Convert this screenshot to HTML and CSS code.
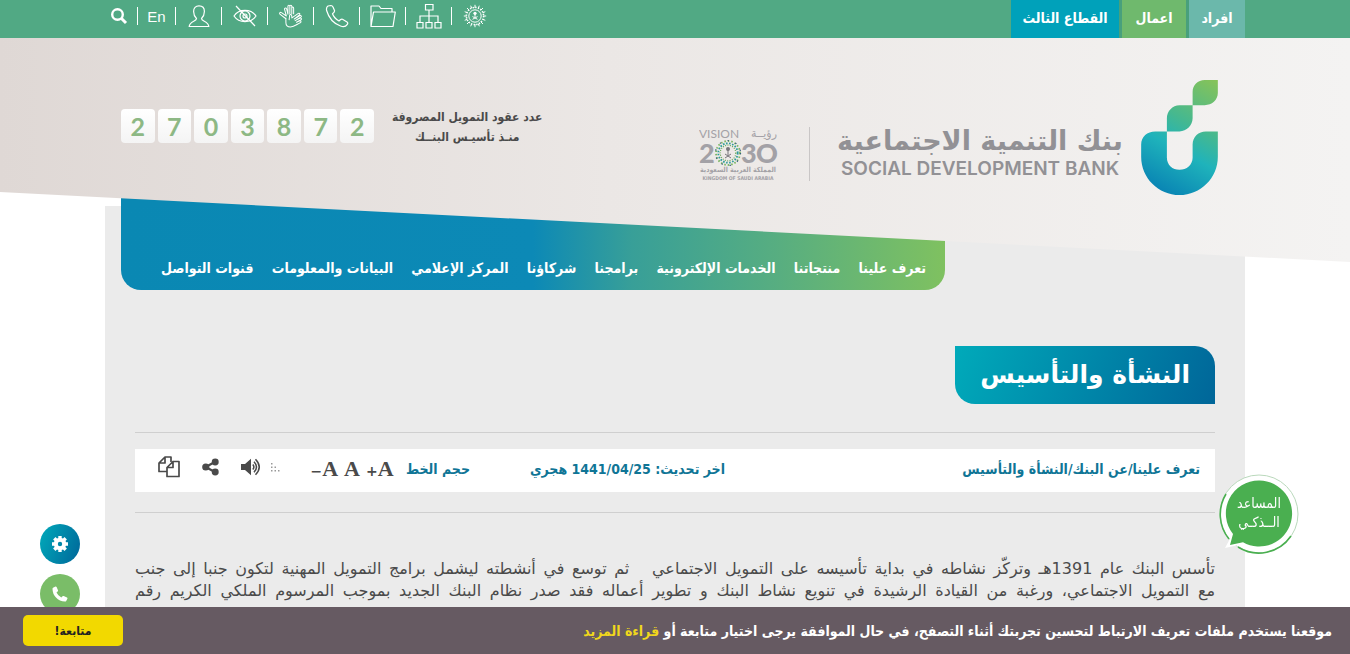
FILE: index.html
```html
<!DOCTYPE html>
<html lang="ar" dir="rtl">
<head>
<meta charset="utf-8">
<title>النشأة والتأسيس</title>
<link rel="stylesheet" href="styles.css">
</head>
<body>
<div class="topbar">
  <div class="container topbar-inner">
    <nav class="sectors" aria-label="القطاعات">
      <a class="sector sector-people" href="#">افراد</a>
      <a class="sector sector-business" href="#">اعمال</a>
      <a class="sector sector-third" href="#">القطاع الثالث</a>
    </nav>
    <div class="quick" dir="ltr">
      <a class="quick-item quick-small" href="#" aria-label="بحث"><svg width="18" height="18" viewBox="0 0 18 18" fill="none" stroke="#fff" stroke-width="2.4"><circle cx="7.5" cy="7.5" r="5.3"/><path d="M11.5 11.5L16 16" stroke-width="3"/></svg></a>
      <a class="quick-item quick-small" href="#">En</a>
      <a class="quick-item" href="#" aria-label="حسابي"><svg width="22" height="24" viewBox="0 0 22 24" fill="none" stroke="#fff" stroke-width="1.2"><path d="M8.500 14.500C6.500 12.500 5.600 10 5.600 7.500C5.600 4 7.600 1.800 11 1.800C14.400 1.800 16.400 4 16.400 7.500C16.400 10 15.500 12.500 13.500 14.500C13.500 17.500 20.500 17 20.800 22.500H1.200C1.500 17 8.500 17.500 8.500 14.500Z"/></svg></a>
      <a class="quick-item" href="#" aria-label="ضعاف البصر"><svg width="24" height="24" viewBox="0 0 24 24" fill="none" stroke="#fff" stroke-width="1.2"><path d="M1 12C6 4.500 18 4.500 23 12C18 19.500 6 19.500 1 12Z"/><circle cx="12" cy="12" r="5"/><circle cx="12" cy="12" r="2"/><path d="M3 2L22 22"/></svg></a>
      <a class="quick-item" href="#" aria-label="لغة الإشارة"><svg width="25" height="24" viewBox="0 0 26 26" fill="none" stroke="#fff" stroke-width="1.100" stroke-linejoin="round"><path d="M8 16L1.500 11C.5 9.700 2 8.500 3.200 9.400L8.500 13L6.500 5.500C6.500 4 8.300 3.800 8.800 5.200L10.200 11V2.500C10.200 1 12.300 1 12.300 2.500V10.500V2.500C12.300 1 14.400 1 14.400 2.500V10.500V4.500C14.400 3 16.400 3 16.400 4.500V11"/><path d="M8 15V20C8 23 10 24.800 13 24.800C17 24.800 19 22.500 24 20C25 19 24 18 23 18.300L19.500 19.800L24.500 17C25.500 16 24.500 15 23.500 15.300L18 18L24.500 14C25.300 13 24.300 12 23.300 12.500L17 16.300L23 11.500C23.500 10.500 22.500 9.500 21.500 10.200L14.500 15L14.300 12.500C13.800 11 12 11.200 12 12.700L11.500 17.500"/></svg></a>
      <a class="quick-item" href="#" aria-label="اتصل بنا"><svg width="24" height="24" viewBox="0 0 24 24" fill="none" stroke="#fff" stroke-width="1.200" stroke-linejoin="round"><path d="M3 2L6 1.500C7 1.500 7.500 2 8 3L9.500 6.500C9.800 7.500 9.300 8.300 7.500 9.700C8.500 12.500 11 15.200 14 17C15.700 15 16.400 14.800 17.500 15.300L22 18C23 18.700 22.900 19.500 22.300 20.300C20.800 22.600 18.500 23.200 15.500 22C8.500 19.500 3.500 13 1.600 6.500C1.200 4.500 1.500 3 3 2Z"/></svg></a>
      <a class="quick-item" href="#" aria-label="الملفات"><svg width="26" height="24" viewBox="0 0 26 24" fill="none" stroke="#fff" stroke-width="1.200" stroke-linejoin="round"><path d="M1 22.500V2H9L11 4.500H22V8M1 22.500L3.500 8H25.300L23 22.500Z"/></svg></a>
      <a class="quick-item" href="#" aria-label="خريطة الموقع"><svg width="26" height="26" viewBox="0 0 26 26" fill="none" stroke="#fff" stroke-width="1.200"><path d="M9.500 1.500H17V7H9.500ZM1 19.500H7V25H1ZM10 19.500H16V25H10ZM19 19.500H25V25H19ZM13 7V19.500M4 19.500V13H22V19.500"/></svg></a>
      <a class="quick-item" href="#" aria-label="المنصة الوطنية"><svg width="24" height="24" viewBox="0 0 24 24" fill="none" stroke="#fff" stroke-width="1"><circle cx="12" cy="12" r="6.200"/><circle cx="12" cy="12" r="8.600" stroke-width="1.600" stroke-dasharray="1.400 1.300"/><path d="M12 .8V4M12 20V23.200M.8 12H4M20 12H23.200M4 4L6.200 6.200M17.800 17.800L20 20M20 4L17.800 6.200M4 20L6.200 17.800M7.700 1.700L8.700 4.200M16.300 1.700L15.300 4.200M7.700 22.300L8.700 19.800M16.300 22.300L15.300 19.800M1.700 7.700L4.200 8.700M1.700 16.300L4.200 15.300M22.300 7.700L19.800 8.700M22.300 16.300L19.800 15.300"/><path d="M12 10V13M9.500 15.300L14.500 12.600M9.500 12.600L14.500 15.300"/><circle cx="12" cy="9.300" r="1.600" fill="#fff" stroke="none"/></svg></a>
    </div>
  </div>
</div>

<header class="hero">
  <div class="container hero-inner">
    <a class="brand" href="#" aria-label="بنك التنمية الاجتماعية">
      <svg class="brand-mark" width="77" height="115" viewBox="0 0 76 114">
        <defs><linearGradient id="mark" gradientUnits="userSpaceOnUse" x1="76" y1="0" x2="14" y2="112"><stop offset="0" stop-color="#88c357"/><stop offset=".4" stop-color="#45b890"/><stop offset=".62" stop-color="#1fb3bb"/><stop offset="1" stop-color="#0780b3"/></linearGradient></defs>
        <path fill="url(#mark)" d="M76 0H63C56 0 51 5 51 12V25H63C70 25 76 20 76 13ZM51 25H38C31 25 25.500 31 25.500 38V51H38C45 51 51 45 51 38ZM25.500 51H14C6 51 0 56 0 64V76C0 97 17 114 38 114C59 114 76 97 76 76V51H64C57 51 51 56 51 64V77C51 84 45 89 38 89C31 89 25.500 84 25.500 77Z"/>
      </svg>
      <span class="brand-name">
        <span class="brand-ar">بنك التنمية الاجتماعية</span>
        <span class="brand-en" dir="ltr">SOCIAL DEVELOPMENT BANK</span>
      </span>
    </a>
    <a class="vision" href="#" aria-label="رؤية 2030">
      <svg width="80" height="54" viewBox="0 0 80 54" direction="ltr">
        <g fill="#a3a1a6">
          <text class="vision-word" x="0" y="11">VISION</text>
          <text class="vision-word-ar" x="78" y="10" text-anchor="end">رؤيــة</text>
          <g class="vision-year"><text x="0" y="36">2</text><text x="42" y="36">3</text><text x="57" y="36">O</text></g>
          <text class="vision-tiny-ar" x="39" y="45" text-anchor="middle">المملكة العربية السعودية</text>
          <text class="vision-tiny" x="39" y="53" text-anchor="middle">KINGDOM OF SAUDI ARABIA</text>
        </g>
        <g fill="none">
          <circle cx="29" cy="26" r="12" stroke="#7bb661" stroke-width="1.800" stroke-dasharray="1.500 2"/>
          <circle cx="29" cy="26" r="9.700" stroke="#2e9c9a" stroke-width="1.800" stroke-dasharray="1.600 1.500"/>
          <circle cx="29" cy="26" r="7.800" stroke="#68a957" stroke-width="1.200" stroke-dasharray="1 1.400"/>
          <circle cx="29" cy="26" r="12.500" stroke="#345a80" stroke-width="1.200" stroke-dasharray="1.300 7"/>
          <path d="M29 23V28M26 31L32 27M26 27L32 31" stroke="#77757a"/>
        </g>
        <circle cx="29" cy="22" r="2" fill="#77757a"/>
      </svg>
    </a>
    <div class="counter">
      <p class="counter-label">عدد عقود التمويل المصروفة<br>منـذ تأسيـس البنــك</p>
      <div class="digits" dir="ltr"><span>2</span><span>7</span><span>0</span><span>3</span><span>8</span><span>7</span><span>2</span></div>
    </div>
  </div>
</header>

<main class="container page">
  <nav class="menu" aria-label="القائمة الرئيسية">
    <a href="#">تعرف علينا</a>
    <a href="#">منتجاتنا</a>
    <a href="#">الخدمات الإلكترونية</a>
    <a href="#">برامجنا</a>
    <a href="#">شركاؤنا</a>
    <a href="#">المركز الإعلامي</a>
    <a href="#">البيانات والمعلومات</a>
    <a href="#">قنوات التواصل</a>
  </nav>

  <div class="content">
    <h1 class="title">النشأة والتأسيس</h1>
    <div class="tools-wrap">
      <div class="tools">
        <div class="crumbs"><a href="#">تعرف علينا</a>/<a href="#">عن البنك</a>/<span>النشأة والتأسيس</span></div>
        <div class="updated">اخر تحديث: <bdi>1441/04/25</bdi> هجري</div>
        <div class="actions">
          <span class="size-label">حجم الخط</span>
          <div class="sizes" dir="ltr">
            <button type="button"><span class="sign">−</span>A</button>
            <button type="button">A</button>
            <button type="button"><span class="sign">+</span>A</button>
          </div>
          <div class="share" dir="ltr">
            <button type="button" aria-label="نسخ"><svg width="22" height="22" viewBox="0 0 22 22" fill="none" stroke="#4a4a4a" stroke-width="1.700" stroke-linejoin="round"><path d="M9 15.500H1V7L7 1H13V6M7 1V7H1"/><path d="M15 5.500H21V20.500H9V11.500L15 5.500V11.500H9"/></svg></button>
            <button type="button" aria-label="مشاركة"><svg width="17" height="18" viewBox="0 0 18 18" fill="#4a4a4a"><path d="M4 9L14 3.500M4 9L14 14.500" stroke="#4a4a4a" stroke-width="2.400"/><circle cx="4" cy="9" r="3.800"/><circle cx="14" cy="3.800" r="3.700"/><circle cx="14" cy="14.200" r="3.700"/></svg></button>
            <button class="listen" type="button" aria-label="استماع"><svg width="20" height="18" viewBox="0 0 20 18" fill="none" stroke="#4a4a4a" stroke-width="1.500"><path d="M0 6H4L10 .8V17.200L4 12H0Z" fill="#4a4a4a" stroke="none"/><path d="M11.800 6.500Q14 9 11.800 11.500M13 3.800Q18 9 13 14.200M14.500 1.200Q22 9 14.500 16.800"/></svg><svg width="9" height="9" viewBox="0 0 9 9" fill="#999"><path d="M0 0H1.500V1.500H0ZM0 3.500H1.500V5H0ZM3.500 3.500H5V5H3.500ZM0 7H1.500V8.500H0ZM3.500 7H5V8.500H3.500ZM7 7H8.500V8.500H7Z"/></svg></button>
          </div>
        </div>
      </div>
    </div>
    <p class="story">
      <span>تأسس البنك عام 1391هـ وتركّز نشاطه في بداية تأسيسه على التمويل الاجتماعي &nbsp; ثم توسع في أنشطته ليشمل برامج التمويل المهنية لتكون جنبا إلى جنب</span>
      <span>مع التمويل الاجتماعي، ورغبة من القيادة الرشيدة في تنويع نشاط البنك و تطوير أعماله فقد صدر نظام البنك الجديد بموجب المرسوم الملكي الكريم رقم</span>
    </p>
  </div>
</main>

<a class="assistant" href="#">
  <svg width="80" height="80" viewBox="0 0 80 80">
    <circle cx="40" cy="40" r="39" fill="#fff" stroke="#b9d8bb" stroke-width="1"/>
    <path d="M10 65A39 39 0 0 1 7 20M19 73A39 39 0 0 0 72 62" fill="none" stroke="#4aaf50" stroke-width="1.600"/>
    <path d="M13 61L6 74L24 70Z" fill="#fff"/>
    <path d="M40.500 6.500A33 33 0 1 1 24 68.300L11 71L14 60A33 33 0 0 1 40.500 6.500Z" fill="#4aaf50"/>
  </svg>
  <span>المساعد<br>الــذكـي</span>
</a>

<div class="floats">
  <button class="float float-settings" type="button" aria-label="الإعدادات"><svg width="16" height="16" viewBox="0 0 16 16"><g fill="none" stroke="#fff"><circle cx="8" cy="8" r="4.200" stroke-width="4"/><path d="M8 0V3M8 13V16M0 8H3M13 8H16M2.300 2.300L4.500 4.500M11.500 11.500L13.700 13.700M2.300 13.700L4.500 11.500M11.500 4.500L13.700 2.300" stroke-width="3.400"/></g></svg></button>
  <a class="float float-call" href="#" aria-label="اتصال"><svg width="16" height="16" viewBox="0 0 16 16" fill="#fff"><path d="M1 1.800L3.500 .5Q4.200 .3 4.600 1L6 4.200Q6.300 5 5.600 5.500L4.500 6.500Q6 9.800 9.300 11.500L10.500 10.300Q11 9.700 11.700 10L15 11.600Q15.700 12 15.400 12.700L14.200 15Q13.800 15.500 13 15.500Q7.500 15.500 4 11.500Q.5 8 .5 2.800Q.5 2.200 1 1.800Z"/></svg></a>
</div>

<div class="cookies">
  <p>موقعنا يستخدم ملفات تعريف الارتباط لتحسين تجربتك أثناء التصفح، في حال الموافقة يرجى اختيار متابعة أو <a href="#">قراءة المزيد</a></p>
  <button type="button">متابعة!</button>
</div>
</body>
</html>
```
FILE: styles.css
```css
* { box-sizing: border-box; }

body {
  display: flex;
  flex-direction: column;
  min-height: 100vh;
  margin: 0;
  background: #fff;
  color: #4a4a4a;
  font-family: "DejaVu Sans Condensed", "DejaVu Sans", sans-serif;
  font-size: 14px;
}

a { color: inherit; text-decoration: none; }
p, h1 { margin: 0; }
svg { display: block; }
button { margin: 0; padding: 0; border: 0; background: none; color: inherit; font: inherit; cursor: pointer; }

.container { width: 100%; max-width: 1140px; margin: 0 auto; }

/* Top bar */
.topbar { background: #51a984; color: #fff; }
.topbar-inner { display: flex; justify-content: space-between; height: 38px; }
.sectors { display: flex; gap: 3px; background: #48a07c; font-weight: bold; line-height: 36px; text-align: center; }
.sector { padding: 0 11px; white-space: nowrap; }
.sector-people { min-width: 56px; background: #6bb8ab; }
.sector-business { min-width: 64px; background: #6fb96d; }
.sector-third { min-width: 108px; background: #00a1ba; }
.quick { display: flex; padding-top: 7px; font-family: "Liberation Sans", sans-serif; font-size: 15px; }
.quick-item { display: flex; align-items: center; justify-content: center; width: 46px; height: 18px; border-right: 1px solid #fff; }
.quick-small { width: 38px; }
.quick-small:first-child { width: 33px; padding-right: 4px; }
.quick-item:last-child { border-right: 0; }

/* Slanted header */
.hero {
  position: relative;
  z-index: 1;
  height: 224px;
  background: linear-gradient(90deg, #dfd8d5, #ebe7e5 45%, #f4f3f2);
  clip-path: polygon(0 0, 100% 0, 100% 100%, 0 154px);
}
.hero-inner { display: flex; align-items: flex-start; padding: 42px 27px 0 16px; }
.brand { display: flex; gap: 18px; }
.brand-name { display: flex; flex-direction: column; padding-top: 42px; color: #929195; text-align: center; white-space: nowrap; }
.brand-ar { font: bold 27px/38px "DejaVu Sans", sans-serif; }
.brand-en { font: 600 19px/18px Inter, sans-serif; }
.vision { margin: 47px 27px 0 0; padding-right: 30px; border-right: 1px solid #c9c6c6; }
.vision-word { font: 12px Lato, sans-serif; }
.vision-word-ar { font: 11px "DejaVu Sans", sans-serif; }
.vision-year { font: 900 27px Lato, sans-serif; }
.vision-tiny { font: bold 5px "DejaVu Sans Condensed", sans-serif; }
.vision-tiny-ar { font: bold 7px "DejaVu Sans Condensed", sans-serif; }
.counter { display: flex; align-items: flex-start; gap: 18px; margin: 27px auto 0 0; }
.counter-label { line-height: 20px; font-size: 12px; font-weight: bold; text-align: center; white-space: nowrap; }
.digits { display: grid; grid-template-columns: repeat(7, 1fr); gap: 3px; width: 253px; margin-top: 2px; }
.digits span {
  border-radius: 4px;
  background: linear-gradient(#fff, #f4f4f4);
  color: #8db884;
  font: bold 25px/34px Lato, sans-serif;
  text-align: center;
}

/* Page panel */
.page { flex: 1; margin-top: -56px; background: #ebebeb; }
.menu {
  display: flex;
  align-items: flex-end;
  justify-content: space-between;
  width: 824px;
  height: 84px;
  margin: 0 auto 0 16px;
  padding: 0 19px 12px 40px;
  border-radius: 0 0 20px 20px;
  background: linear-gradient(90deg, #0a88b3, #0c89b6 50%, #389f98 62%, #58ae80 80%, #7fc160);
  box-shadow: 0 -14px #0a88b3;
  color: #fff;
  font-weight: bold;
  line-height: 20px;
  white-space: nowrap;
}
.content { padding: 56px 30px 0; }
.title {
  width: fit-content;
  padding: 0 25px;
  border-radius: 0 20px 0 20px;
  background: linear-gradient(110deg, #00aaba, #006699);
  color: #fff;
  font-family: "DejaVu Sans", sans-serif;
  font-size: 25px;
  line-height: 58px;
  white-space: nowrap;
}
.tools-wrap { margin-top: 28px; padding: 16px 0 20px; border: solid #cfcfcf; border-width: 1px 0; }
.tools {
  display: grid;
  grid-template-columns: 475fr 255fr 312fr;
  align-items: center;
  height: 43px;
  padding: 0 15px 3px 23px;
  background: #fff;
  color: #0f7596;
  font-weight: bold;
  white-space: nowrap;
}
.crumbs, .updated, .size-label { line-height: 40px; }
.actions { display: flex; align-items: center; justify-content: space-between; color: #4a4a4a; }
.size-label { color: #0f7596; }
.sizes { display: flex; align-items: baseline; gap: 6px; margin-left: 18px; font: bold 22px/24px "Liberation Serif", serif; }
.sign { font: bold 14px/14px "DejaVu Sans", sans-serif; }
.share { display: flex; align-items: center; gap: 22px; padding-bottom: 4px; }
.listen { display: flex; align-items: center; gap: 10px; }
.story { margin-top: 45px; font-family: "DejaVu Sans", sans-serif; font-size: 16px; line-height: 22px; }
.story span { display: block; text-align: justify; text-align-last: justify; }

/* Floating controls */
.assistant { position: fixed; z-index: 2; top: 474px; right: 51px; color: #fff; text-align: center; }
.assistant span { position: absolute; top: 20px; right: 0; left: 0; line-height: 19px; }
.floats { position: fixed; z-index: 2; top: 524px; left: 40px; display: grid; gap: 10px; }
.float { display: grid; place-items: center; width: 40px; height: 40px; border-radius: 50%; }
.float-settings { background: linear-gradient(110deg, #00aaba, #006699); }
.float-call { background: #7abd68; }

/* Cookie notice */
.cookies {
  position: fixed;
  z-index: 3;
  right: 0;
  bottom: 0;
  left: 0;
  display: flex;
  align-items: center;
  justify-content: space-between;
  height: 47px;
  padding: 0 18px 0 23px;
  background: #665a62;
  color: #fff;
  font-weight: bold;
}
.cookies a { color: #f0d71c; }
.cookies button { width: 100px; height: 31px; border-radius: 5px; background: #f2d900; color: #222; font-size: 12px; }
```
